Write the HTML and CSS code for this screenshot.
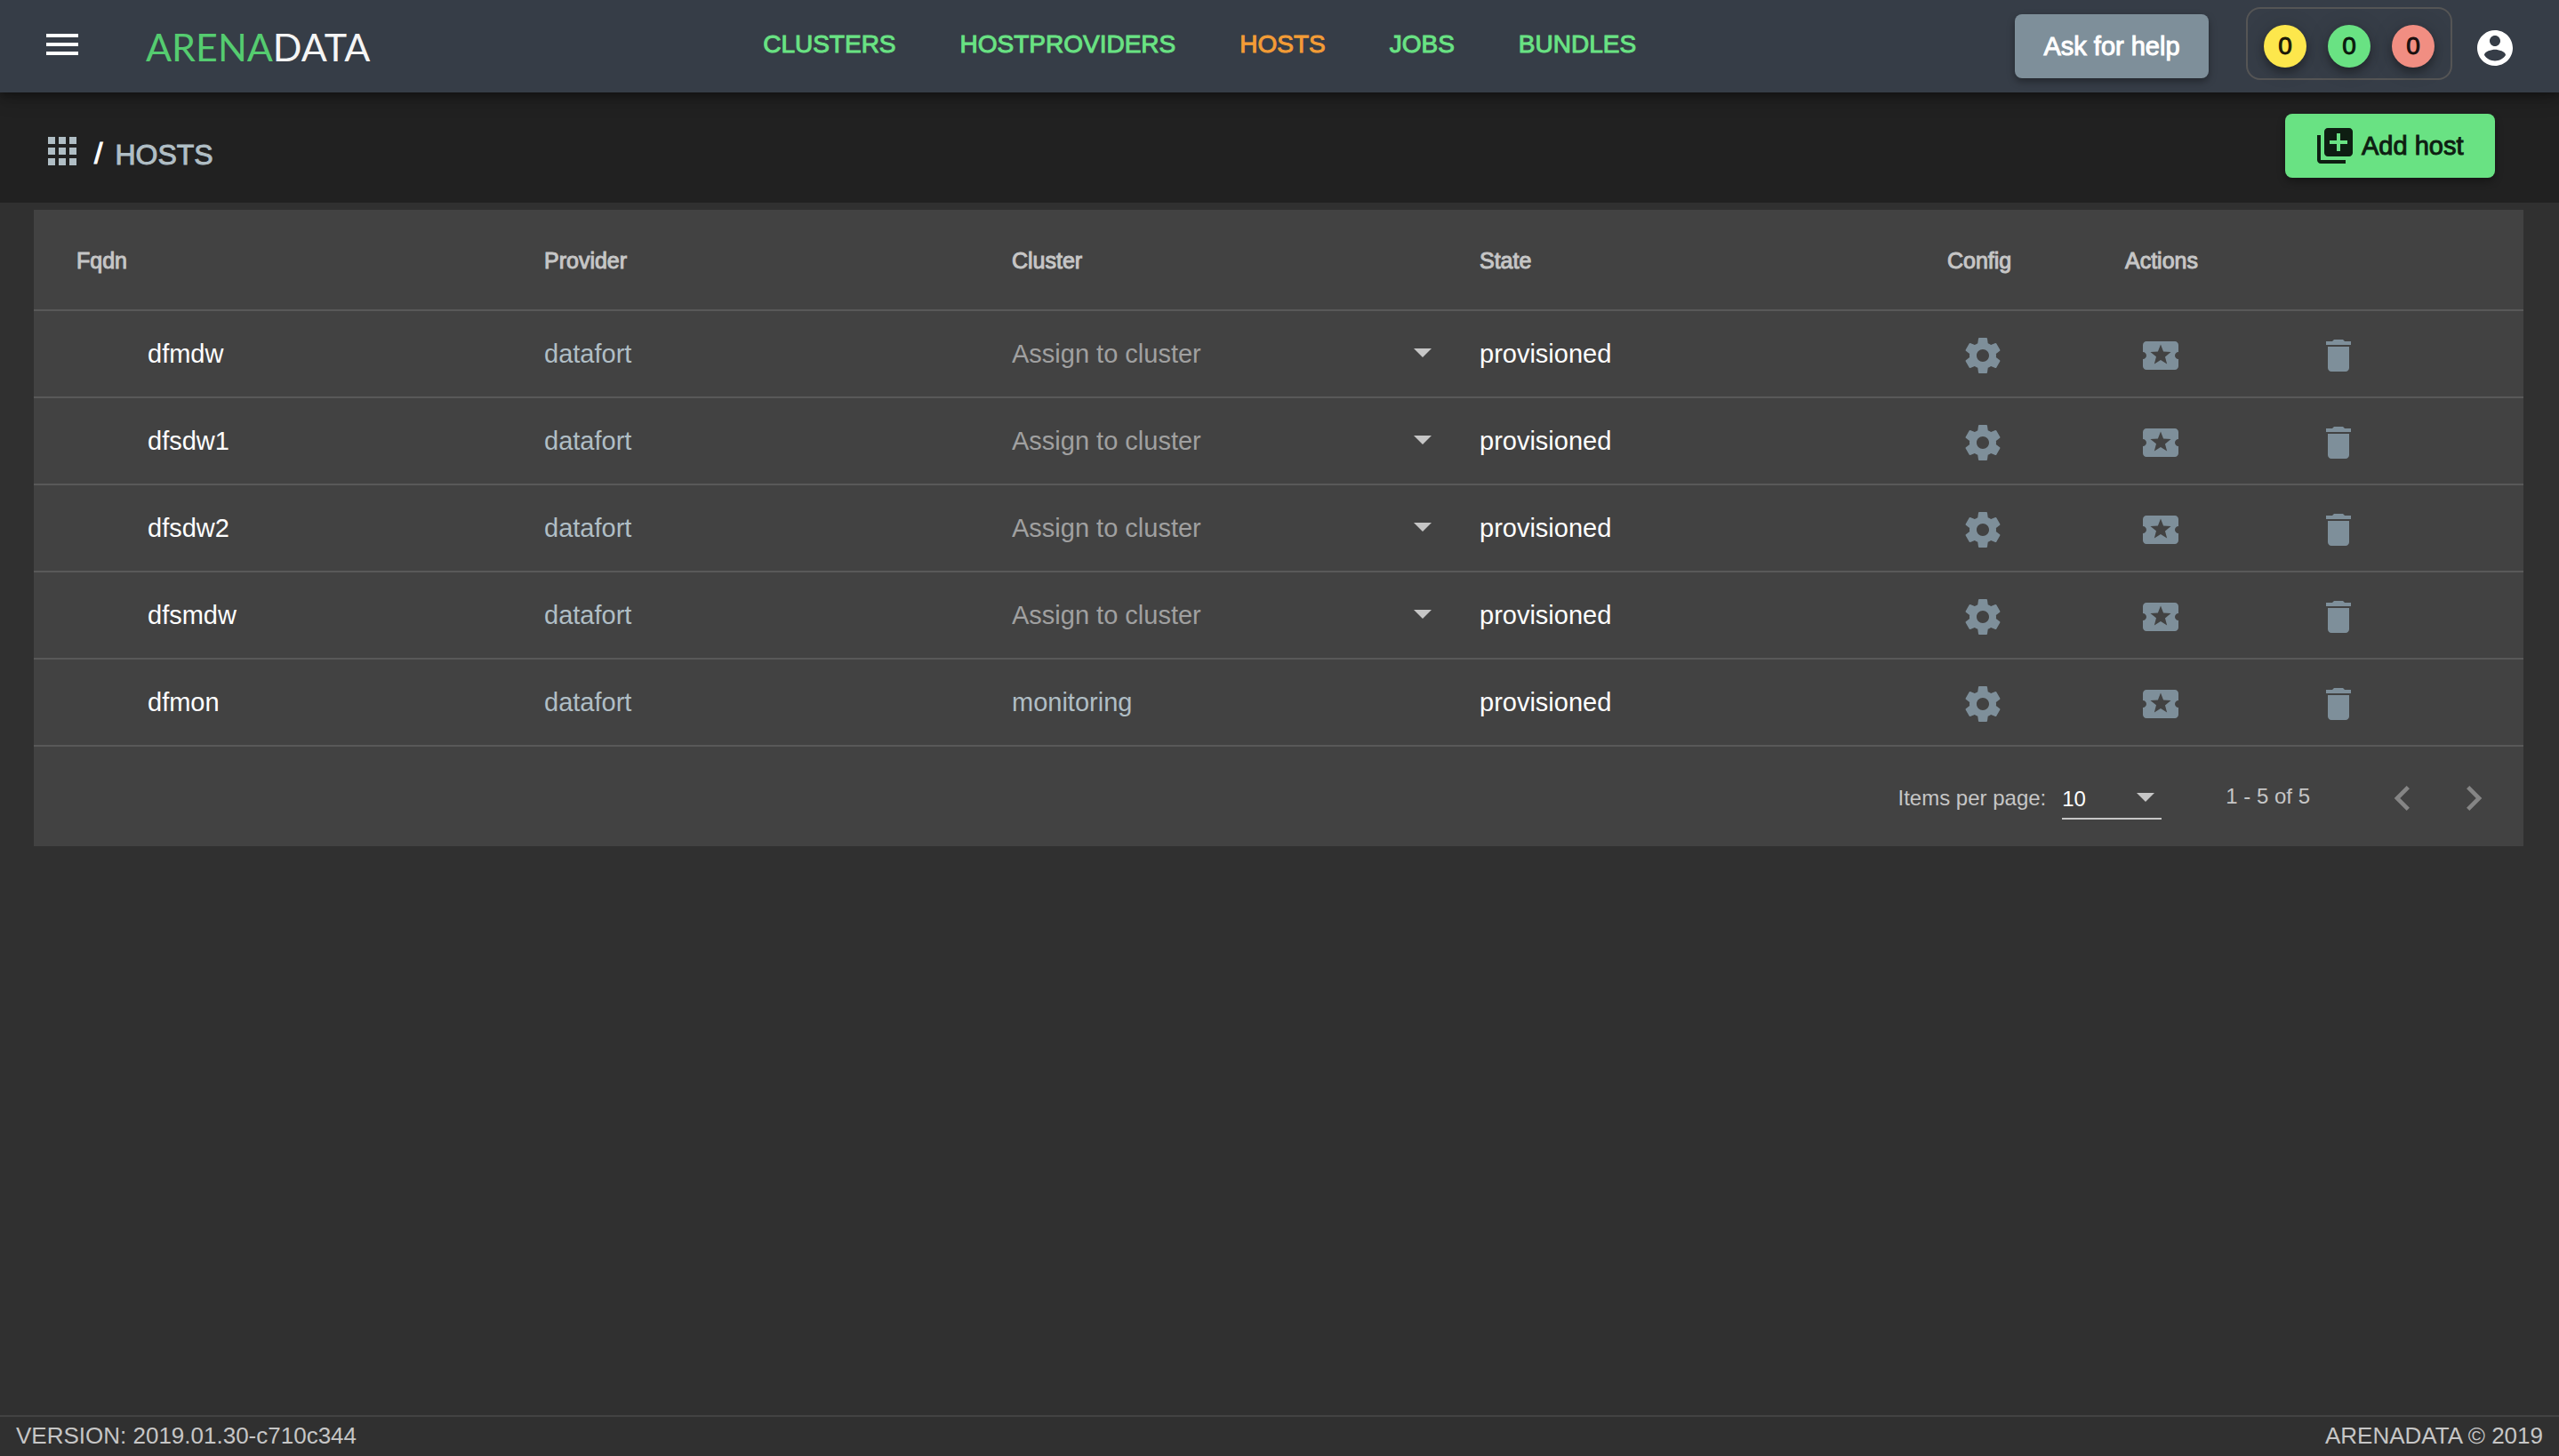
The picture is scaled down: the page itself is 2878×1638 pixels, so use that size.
FILE: index.html
```html
<!DOCTYPE html>
<html lang="en">

<head>
    <meta charset="UTF-8">
    <meta name="viewport" content="width=device-width, initial-scale=1.0">
    <title>Hosts</title>
    <link rel="stylesheet" href="styles.css">
</head>

<body>

    <svg class="sprite" aria-hidden="true">
        <symbol id="menu" viewBox="0 0 24 24"><path d="M3 18h18v-2H3v2zm0-5h18v-2H3v2zm0-7v2h18V6H3z"/></symbol>
        <symbol id="apps" viewBox="0 0 24 24"><path d="M4 8h4V4H4v4zm6 12h4v-4h-4v4zm-6 0h4v-4H4v4zm0-6h4v-4H4v4zm6 0h4v-4h-4v4zm6-10v4h4V4h-4zm-6 4h4V4h-4v4zm6 6h4v-4h-4v4zm0 6h4v-4h-4v4z"/></symbol>
        <symbol id="account" viewBox="0 0 24 24"><path d="M12 2C6.480 2 2 6.480 2 12s4.480 10 10 10 10-4.480 10-10S17.520 2 12 2zm0 3c1.660 0 3 1.340 3 3s-1.340 3-3 3-3-1.340-3-3 1.340-3 3-3zm0 14.200c-2.500 0-4.710-1.280-6-3.220.03-1.990 4-3.080 6-3.080 1.990 0 5.970 1.090 6 3.080-1.290 1.940-3.500 3.220-6 3.220z"/></symbol>
        <symbol id="library-add" viewBox="0 0 24 24"><path d="M4 6H2v14c0 1.100.9 2 2 2h14v-2H4V6zm16-4H8c-1.100 0-2 .9-2 2v12c0 1.100.9 2 2 2h12c1.100 0 2-.9 2-2V4c0-1.100-.9-2-2-2zm-1 9h-4v4h-2v-4H9V9h4V5h2v4h4v2z"/></symbol>
        <symbol id="settings" viewBox="0 0 24 24"><path d="M19.430 12.980c.04-.32.07-.64.07-.98s-.03-.66-.07-.98l2.110-1.650c.19-.15.24-.42.12-.64l-2-3.460c-.12-.22-.39-.3-.61-.22l-2.490 1c-.52-.4-1.080-.73-1.690-.98l-.38-2.650C14.460 2.180 14.250 2 14 2h-4c-.25 0-.46.18-.49.42l-.38 2.650c-.61.25-1.170.59-1.690.98l-2.490-1c-.23-.09-.49 0-.61.22l-2 3.460c-.13.22-.07.49.12.64l2.110 1.650c-.04.32-.07.65-.07.98s.03.66.07.98l-2.110 1.650c-.19.15-.24.42-.12.64l2 3.460c.12.22.39.3.61.22l2.490-1c.52.4 1.080.73 1.690.98l.38 2.650c.03.24.24.42.49.42h4c.25 0 .46-.18.49-.42l.38-2.650c.61-.25 1.170-.59 1.690-.98l2.490 1c.23.09.49 0 .61-.22l2-3.460c.12-.22.07-.49-.12-.64l-2.110-1.650zM12 15.500c-1.930 0-3.500-1.570-3.500-3.500s1.570-3.500 3.500-3.500 3.500 1.570 3.500 3.500-1.570 3.500-3.500 3.500z"/></symbol>
        <symbol id="play" viewBox="0 0 24 24"><path d="M20 12c0-1.100.9-2 2-2V6c0-1.100-.9-2-2-2H4c-1.100 0-1.990.9-1.990 2v4c1.100 0 1.990.9 1.990 2s-.89 2-2 2v4c0 1.100.9 2 2 2h16c1.100 0 2-.9 2-2v-4c-1.100 0-2-.9-2-2zm-4.420 4.800L12 14.500l-3.580 2.300 1.080-4.120-3.290-2.690 4.240-.25L12 5.800l1.540 3.950 4.240.25-3.290 2.690 1.090 4.110z"/></symbol>
        <symbol id="delete" viewBox="0 0 24 24"><path d="M6 19c0 1.100.9 2 2 2h8c1.100 0 2-.9 2-2V7H6v12zM19 4h-3.500l-1-1h-5l-1 1H5v2h14V4z"/></symbol>
        <symbol id="prev" viewBox="0 0 24 24"><path d="M15.410 7.410L14 6l-6 6 6 6 1.410-1.410L10.830 12z"/></symbol>
        <symbol id="next" viewBox="0 0 24 24"><path d="M10 6L8.590 7.410 13.170 12l-4.580 4.590L10 18l6-6z"/></symbol>
    </svg>

    <header class="toolbar">
        <div class="brand">
            <button class="icon-btn" aria-label="Menu"><svg class="icon"><use href="#menu"/></svg></button>
            <a class="logo" href="#"><span>ARENA</span>DATA</a>
        </div>
        <nav class="menu">
            <a href="#">CLUSTERS</a>
            <a href="#">HOSTPROVIDERS</a>
            <a href="#" class="active">HOSTS</a>
            <a href="#">JOBS</a>
            <a href="#">BUNDLES</a>
        </nav>
        <div class="user">
            <button class="btn help">Ask for help</button>
            <div class="counters">
                <button class="counter running" aria-label="Running jobs">0</button>
                <button class="counter success" aria-label="Successful jobs">0</button>
                <button class="counter failed" aria-label="Failed jobs">0</button>
            </div>
            <button class="icon-btn account" aria-label="Account"><svg class="icon"><use href="#account"/></svg></button>
        </div>
    </header>

    <div class="topbar">
        <div class="crumbs">
            <a class="home" href="#" aria-label="Home"><svg class="icon"><use href="#apps"/></svg></a>
            <span class="slash">/</span>
            <a class="crumb" href="#">HOSTS</a>
        </div>
        <button class="btn add"><svg class="icon"><use href="#library-add"/></svg>Add host</button>
    </div>

    <main class="card">
        <table class="hosts">
            <colgroup>
                <col class="col-fqdn">
                <col>
                <col>
                <col>
                <col class="col-icon">
                <col class="col-icon">
                <col class="col-last">
            </colgroup>
            <thead>
                <tr>
                    <th>Fqdn</th>
                    <th>Provider</th>
                    <th>Cluster</th>
                    <th>State</th>
                    <th>Config</th>
                    <th>Actions</th>
                    <th></th>
                </tr>
            </thead>
            <tbody>
                <tr>
                    <td class="fqdn">dfmdw</td>
                    <td class="muted">datafort</td>
                    <td><div class="select assign"><select aria-label="Cluster for dfmdw"><option>Assign to cluster</option><option>monitoring</option></select></div></td>
                    <td>provisioned</td>
                    <td class="tool"><button class="icon-btn" aria-label="Config"><svg class="icon"><use href="#settings"/></svg></button></td>
                    <td class="tool"><button class="icon-btn" aria-label="Actions"><svg class="icon"><use href="#play"/></svg></button></td>
                    <td class="tool"><button class="icon-btn" aria-label="Delete"><svg class="icon"><use href="#delete"/></svg></button></td>
                </tr>
                <tr>
                    <td class="fqdn">dfsdw1</td>
                    <td class="muted">datafort</td>
                    <td><div class="select assign"><select aria-label="Cluster for dfsdw1"><option>Assign to cluster</option><option>monitoring</option></select></div></td>
                    <td>provisioned</td>
                    <td class="tool"><button class="icon-btn" aria-label="Config"><svg class="icon"><use href="#settings"/></svg></button></td>
                    <td class="tool"><button class="icon-btn" aria-label="Actions"><svg class="icon"><use href="#play"/></svg></button></td>
                    <td class="tool"><button class="icon-btn" aria-label="Delete"><svg class="icon"><use href="#delete"/></svg></button></td>
                </tr>
                <tr>
                    <td class="fqdn">dfsdw2</td>
                    <td class="muted">datafort</td>
                    <td><div class="select assign"><select aria-label="Cluster for dfsdw2"><option>Assign to cluster</option><option>monitoring</option></select></div></td>
                    <td>provisioned</td>
                    <td class="tool"><button class="icon-btn" aria-label="Config"><svg class="icon"><use href="#settings"/></svg></button></td>
                    <td class="tool"><button class="icon-btn" aria-label="Actions"><svg class="icon"><use href="#play"/></svg></button></td>
                    <td class="tool"><button class="icon-btn" aria-label="Delete"><svg class="icon"><use href="#delete"/></svg></button></td>
                </tr>
                <tr>
                    <td class="fqdn">dfsmdw</td>
                    <td class="muted">datafort</td>
                    <td><div class="select assign"><select aria-label="Cluster for dfsmdw"><option>Assign to cluster</option><option>monitoring</option></select></div></td>
                    <td>provisioned</td>
                    <td class="tool"><button class="icon-btn" aria-label="Config"><svg class="icon"><use href="#settings"/></svg></button></td>
                    <td class="tool"><button class="icon-btn" aria-label="Actions"><svg class="icon"><use href="#play"/></svg></button></td>
                    <td class="tool"><button class="icon-btn" aria-label="Delete"><svg class="icon"><use href="#delete"/></svg></button></td>
                </tr>
                <tr>
                    <td class="fqdn">dfmon</td>
                    <td class="muted">datafort</td>
                    <td class="muted">monitoring</td>
                    <td>provisioned</td>
                    <td class="tool"><button class="icon-btn" aria-label="Config"><svg class="icon"><use href="#settings"/></svg></button></td>
                    <td class="tool"><button class="icon-btn" aria-label="Actions"><svg class="icon"><use href="#play"/></svg></button></td>
                    <td class="tool"><button class="icon-btn" aria-label="Delete"><svg class="icon"><use href="#delete"/></svg></button></td>
                </tr>
            </tbody>
        </table>

        <div class="paginator">
            <label for="pageSize">Items per page:</label>
            <div class="select page-size">
                <select id="pageSize">
                    <option>10</option>
                    <option>25</option>
                    <option>50</option>
                </select>
            </div>
            <span class="range">1 - 5 of 5</span>
            <button class="icon-btn page" aria-label="Previous page" disabled><svg class="icon"><use href="#prev"/></svg></button>
            <button class="icon-btn page" aria-label="Next page" disabled><svg class="icon"><use href="#next"/></svg></button>
        </div>
    </main>

    <footer class="footer">
        <span>VERSION: 2019.01.30-c710c344</span>
        <span>ARENADATA © 2019</span>
    </footer>

</body>

</html>
```

FILE: styles.css
```css
* {
    box-sizing: border-box;
}

body {
    margin: 0;
    min-height: 100vh;
    display: flex;
    flex-direction: column;
    font-family: "Liberation Sans", Arial, sans-serif;
    font-size: 28px;
    color: white;
    background-color: #303030;
}

a {
    color: inherit;
    text-decoration: none;
}

button, select {
    font: inherit;
    color: inherit;
    border: none;
    padding: 0;
    background: none;
    cursor: pointer;
}

.sprite {
    display: none;
}

.icon {
    display: block;
    width: 48px;
    height: 48px;
    fill: currentColor;
}

.icon-btn {
    display: flex;
    align-items: center;
    justify-content: center;
    width: 80px;
    height: 80px;
}

/* top toolbar */

.toolbar {
    position: relative;
    display: flex;
    align-items: center;
    justify-content: space-between;
    height: 104px;
    padding: 0 32px 0 30px;
    background-color: #363d47;
    box-shadow: 0 4px 8px rgba(0, 0, 0, 0.3), 0 8px 20px rgba(0, 0, 0, 0.2);
}

.brand {
    display: flex;
    align-items: center;
    gap: 54px;
}

.brand .icon-btn {
    padding-bottom: 4px;
}

.logo {
    font-family: Lato, sans-serif;
    font-size: 43px;
    padding-right: 16px;
    color: #f5f5f5;
}

.logo span {
    color: #55cc70;
}

.menu {
    display: flex;
    gap: 72px;
    padding-bottom: 4px;
    color: #69e283;
    -webkit-text-stroke: 1px;
}

.menu .active {
    color: #f39c36;
}

.user {
    display: flex;
    align-items: center;
}

.btn {
    height: 72px;
    padding: 0 32px;
    border-radius: 8px;
    font-size: 29px;
    -webkit-text-stroke: 1px;
    box-shadow: 0 4px 8px rgba(0, 0, 0, 0.35);
}

.help {
    width: 218px;
    background-color: #7e8f9a;
}

.counters {
    display: flex;
    gap: 24px;
    margin: 0 8px 6px 42px;
    padding: 18px 18px 12px;
    border: 2px solid #555;
    border-radius: 16px;
}

.counter {
    width: 48px;
    height: 48px;
    border-radius: 50%;
    color: rgba(0, 0, 0, 0.87);
    -webkit-text-stroke: 1px;
    box-shadow: 0 6px 10px rgba(0, 0, 0, 0.3), 0 2px 24px rgba(0, 0, 0, 0.15);
}

.running {
    background-color: #fde74c;
}

.success {
    background-color: #69e283;
}

.failed {
    background-color: #f18e82;
}

.account {
    padding-top: 4px;
}

/* breadcrumbs bar */

.topbar {
    display: flex;
    justify-content: space-between;
    align-items: flex-start;
    height: 124px;
    padding: 24px 72px 0 46px;
    background-color: #212121;
}

.crumbs {
    display: flex;
    align-items: center;
    padding-top: 18px;
    font-size: 32px;
    -webkit-text-stroke: 1px;
}

.home, .crumb {
    color: #b0bec5;
}

.slash {
    margin: 4px 14px 0 12px;
    font-size: 34px;
}

.crumb {
    padding-top: 8px;
}

.add {
    display: flex;
    align-items: center;
    gap: 6px;
    width: 236px;
    color: #0e1e12;
    background-color: #69e283;
}

/* hosts table */

.card {
    margin: 8px 40px 0 38px;
    background-color: #424242;
}

.hosts {
    width: 100%;
    table-layout: fixed;
    border-collapse: separate;
    border-spacing: 0;
}

.col-fqdn {
    width: 20.5%;
}

.col-icon {
    width: 200px;
}

.col-last {
    width: 248px;
}

th, td {
    padding: 0;
    text-align: left;
    border-bottom: 2px solid #595959;
}

th {
    height: 114px;
    padding-top: 2px;
    font-size: 25px;
    font-weight: normal;
    color: #c6c6c6;
    -webkit-text-stroke: 1px;
}

td {
    height: 98px;
    font-size: 29px;
}

th:first-child {
    padding-left: 48px;
}

.fqdn {
    padding-left: 128px;
}

.muted {
    color: #b0bec5;
}

.tool {
    padding-top: 4px;
    color: #7e8f9a;
}

.select {
    position: relative;
}

.select select {
    display: block;
    width: 100%;
    appearance: none;
    outline: none;
}

.select::after {
    content: "";
    position: absolute;
    top: 50%;
    right: 8px;
    margin-top: -6px;
    border: 10px solid transparent;
    border-top-color: #c6c6c6;
    border-bottom: none;
    pointer-events: none;
}

.assign {
    margin-right: 46px;
    color: #a0a0a0;
}

/* paginator */

.paginator {
    display: flex;
    align-items: center;
    justify-content: flex-end;
    height: 112px;
    padding: 4px 16px 0 0;
    font-size: 24px;
    color: #c6c6c6;
}

.page-size {
    width: 112px;
    margin: 2px 72px 0 18px;
    border-bottom: 2px solid #c6c6c6;
}

.page-size select {
    height: 44px;
    color: white;
}

.range {
    margin-right: 64px;
    padding-bottom: 4px;
}

.page {
    color: #858585;
    cursor: default;
}

.page .icon {
    width: 56px;
    height: 56px;
}

.footer {
    display: flex;
    justify-content: space-between;
    align-items: center;
    height: 46px;
    margin-top: auto;
    padding: 0 18px 2px;
    border-top: 2px solid #424242;
    font-size: 26px;
    color: #c6c6c6;
}
```
